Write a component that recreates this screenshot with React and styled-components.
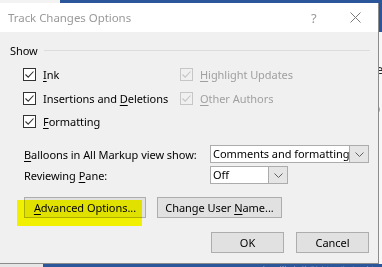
import React from 'react'
import styled, { createGlobalStyle } from 'styled-components'

const GlobalStyle = createGlobalStyle`
    body {
        margin: 0;
        overflow: hidden;
        background: #2b579a;
    }
`

const Screen = styled.div`
    width: 382px;
    height: 267px;
    display: grid;
    grid-template-columns: 379px 3px;
    grid-template-rows: 3px 261px 3px;
    grid-template-areas:
        "top top"
        "dialog side"
        "bottom bottom";
    font-family: "Noto Sans", "Open Sans", sans-serif;
    font-size: 11px;
    letter-spacing: -0.05px;
    white-space: nowrap;
    overflow: hidden;
`

const TopStrip = styled.div`
    grid-area: top;
    background: linear-gradient(to right, #f3f3f3 0 60px, #2b579a 60px);
`

const SideStrip = styled.div`
    grid-area: side;
    display: flex;
    flex-direction: column;
    background: #f7f7f7;
    border-top: 29px solid #2b579a;
    overflow: hidden;
`

const DocGlyph = styled.span`
    display: block;
    height: ${p => p.$h}px;
    margin-left: -3px;
    font-size: 13px;
    line-height: ${p => p.$h}px;
    color: #222;
`

const BottomStrip = styled.div`
    grid-area: bottom;
    background: linear-gradient(to right, #e6e6e6 0 43px, #2b579a 43px);
    padding-left: 263px;
    overflow: hidden;
`

const BottomText = styled.span`
    display: block;
    font-size: 6px;
    line-height: 8px;
    color: #a9bcd9;
`

const Dialog = styled.div`
    grid-area: dialog;
    display: flex;
    flex-direction: column;
    background: #f0f0f0;
    border-right: 1px solid #8c8c8c;
    border-bottom: 1px solid #8c8c8c;
`

const TitleBar = styled.div`
    height: 29px;
    display: flex;
    align-items: center;
    padding-left: 8px;
    background: #fff;
`

const TitleText = styled.span`
    flex: 1;
    color: #999;
    font-size: 11.5px;
`

const Help = styled.span`
    width: 16px;
    margin-right: 23px;
    color: #9a9a9a;
    font-size: 13px;
`

const CloseIcon = styled.svg`
    width: 11px;
    height: 11px;
    margin-right: 17px;
`

const Body = styled.div`
    flex: 1;
    padding: 9px 9px 0 10px;
    color: #000;
`

const GroupHeader = styled.div`
    height: 18px;
    display: flex;
    align-items: center;
    gap: 6px;
    margin-right: -1px;
`

const Rule = styled.div`
    flex: 1;
    height: 1px;
    background: #dcdcdc;
`

const CheckGrid = styled.div`
    margin: 4px 0 0 13px;
    display: grid;
    grid-template-columns: 157px 1fr;
    grid-auto-rows: 23.5px;
`

const CheckRow = styled.label`
    display: flex;
    align-items: center;
    gap: 7px;
    color: ${p => (p.$disabled ? '#a0a0a0' : '#000')};
`

const Box = styled.span`
    width: 13px;
    height: 13px;
    flex: none;
    box-sizing: border-box;
    border: 1px solid ${p => (p.$disabled ? '#c6c6c6' : '#333')};
    background: ${p => (p.$disabled ? '#f0f0f0' : '#fff')};
    display: flex;
    align-items: center;
    justify-content: center;
`

const Key = styled.span`
    text-decoration: underline;
    text-underline-offset: 2px;
`

const FormGrid = styled.div`
    margin: 11.5px 0 0 14px;
    display: grid;
    grid-template-columns: 186px 1fr;
    grid-auto-rows: 18px;
    row-gap: 3px;
    align-items: center;
`

const Select = styled.div`
    width: ${p => p.$w}px;
    height: 18px;
    box-sizing: border-box;
    display: flex;
    border: 1px solid #acacac;
    background: #fff;
`

const SelectValue = styled.span`
    flex: 1;
    padding-left: 2px;
    line-height: 16px;
    overflow: hidden;
`

const SelectArrow = styled.span`
    width: 18px;
    flex: none;
    display: flex;
    align-items: center;
    justify-content: center;
    background: #e5e5e5;
    border-left: 1px solid #acacac;
`

const ButtonRow = styled.div`
    position: relative;
    display: flex;
    gap: ${p => p.$gap}px;
    justify-content: ${p => (p.$end ? 'flex-end' : 'flex-start')};
    margin: ${p => p.$mt}px 0 0 ${p => (p.$end ? 0 : 14)}px;
`

const Button = styled.div`
    width: ${p => p.$w}px;
    height: 21px;
    box-sizing: border-box;
    display: flex;
    align-items: center;
    justify-content: center;
    background: #e1e1e1;
    border: 1px solid #adadad;
`

// yellow marker someone drew over the screenshot
const Highlight = styled.div`
    position: absolute;
    left: -7px;
    top: 3px;
    width: 125px;
    height: 26px;
    background: #f2f000;
    mix-blend-mode: darken;
    pointer-events: none;
`

const Check = ({ disabled }) => (
    <svg width="11" height="11" viewBox="0 0 11 11">
        <path d="M1.5 5.5 L4.2 8.2 L9.5 2.5" fill="none" stroke={disabled ? '#c4c4c4' : '#333'} strokeWidth="1.1" />
    </svg>
)

const Chevron = () => (
    <svg width="9" height="5" viewBox="0 0 9 5">
        <path d="M0.5 0.5 L4.5 4.5 L8.5 0.5" fill="none" stroke="#606060" strokeWidth="1" />
    </svg>
)

const Option = ({ label, keyIndex = 0, disabled }) => (
    <CheckRow $disabled={disabled}>
        <Box $disabled={disabled}><Check disabled={disabled} /></Box>
        <span>
            {label.slice(0, keyIndex)}
            <Key>{label[keyIndex]}</Key>
            {label.slice(keyIndex + 1)}
        </span>
    </CheckRow>
)

const App = () => {
    return (
        <>
            <GlobalStyle />
            <Screen>
                <TopStrip />
                <Dialog>
                    <TitleBar>
                        <TitleText>Track Changes Options</TitleText>
                        <Help>?</Help>
                        <CloseIcon viewBox="0 0 11 11">
                            <path d="M0.5 0.5 L10.5 10.5 M10.5 0.5 L0.5 10.5" stroke="#7a7a7a" strokeWidth="1" />
                        </CloseIcon>
                    </TitleBar>
                    <Body>
                        <GroupHeader>
                            <span>Show</span>
                            <Rule />
                        </GroupHeader>

                        <CheckGrid>
                            <Option label="Ink" />
                            <Option label="Highlight Updates" disabled />
                            <Option label="Insertions and Deletions" keyIndex={15} />
                            <Option label="Other Authors" disabled />
                            <Option label="Formatting" />
                        </CheckGrid>

                        <FormGrid>
                            <span><Key>B</Key>alloons in All Markup view show:</span>
                            <Select $w={159}>
                                <SelectValue>Comments and formatting</SelectValue>
                                <SelectArrow><Chevron /></SelectArrow>
                            </Select>
                            <span>Reviewing <Key>P</Key>ane:</span>
                            <Select $w={78}>
                                <SelectValue>Off</SelectValue>
                                <SelectArrow><Chevron /></SelectArrow>
                            </Select>
                        </FormGrid>

                        <ButtonRow $gap={11} $mt={13}>
                            <Button $w={122}><span><Key>A</Key>dvanced Options...</span></Button>
                            <Button $w={125}><span>Change User <Key>N</Key>ame...</span></Button>
                            <Highlight />
                        </ButtonRow>

                        <ButtonRow $gap={12} $mt={14} $end>
                            <Button $w={73}>OK</Button>
                            <Button $w={73}>Cancel</Button>
                        </ButtonRow>
                    </Body>
                </Dialog>
                <SideStrip>
                    <DocGlyph $h={24}>l</DocGlyph>
                    <DocGlyph $h={26}>e</DocGlyph>
                    <DocGlyph $h={52}>)</DocGlyph>
                </SideStrip>
                <BottomStrip>
                    <BottomText>Learn Word with this interactive template</BottomText>
                </BottomStrip>
            </Screen>
        </>
    )
}

export default App
